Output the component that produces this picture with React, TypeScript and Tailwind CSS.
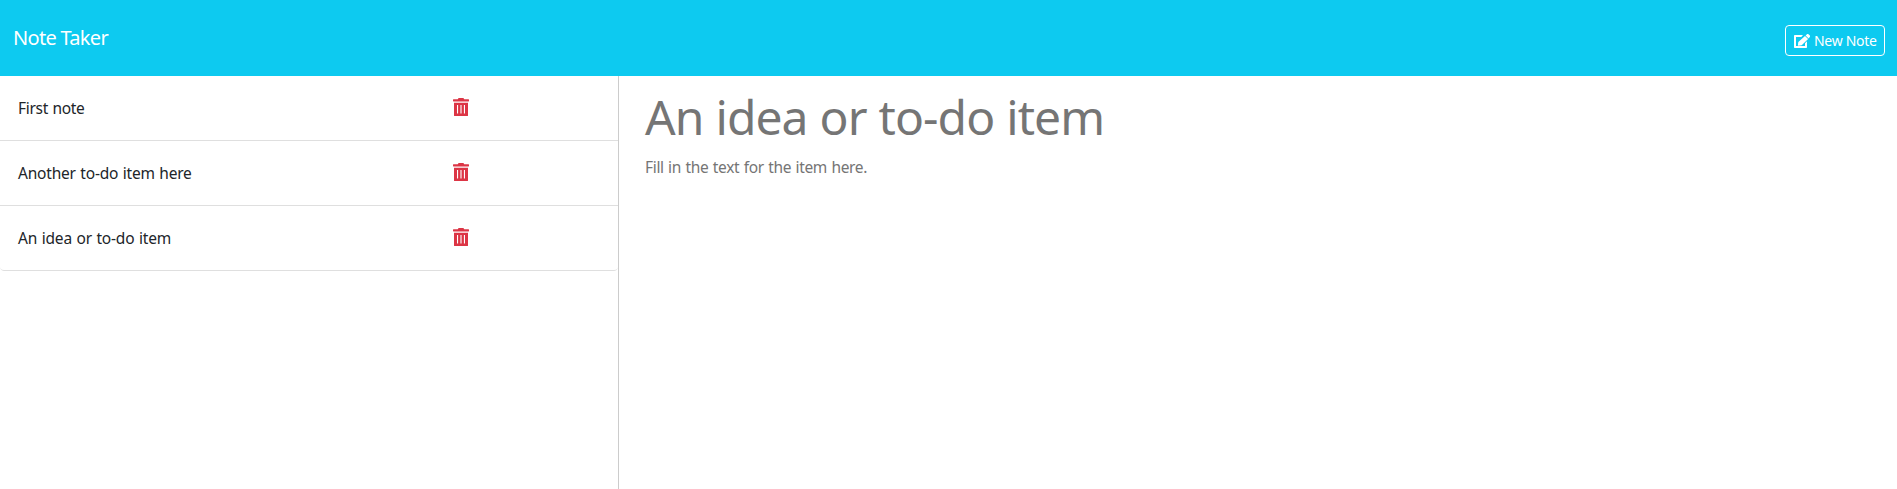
const notes = [
  { title: "First note", spacing: "tracking-[-0.3px]" },
  { title: "Another to-do item here", spacing: "tracking-[-0.2px]" },
  { title: "An idea or to-do item", spacing: "tracking-[-0.18px]" },
];

function EditIcon() {
  return (
    <svg viewBox="0 0 16 14" className="h-[14px] w-4 shrink-0" fill="currentColor">
      <path d="M.8 1H9L7.3 3H2v9h9V9.3l2-2V13.2a.8.8 0 0 1-.8.8H.8a.8.8 0 0 1-.8-.8V1.8A.8.8 0 0 1 .8 1Z" />
      <path d="M11 1.900 14.100 5 7.700 11.300l-3.100.4a.6.6 0 0 1-.7-.7l.4-2.900ZM11.600 1.400 12.700.4a1.400 1.400 0 0 1 2 0l.9.9a1.400 1.400 0 0 1 0 2l-1 1.100Z" />
    </svg>
  );
}

function TrashIcon() {
  return (
    <svg viewBox="0 0 16 18" className="mt-[22px] h-[18px] w-4 shrink-0 text-[#dc3545]" fill="currentColor">
      <path d="M5 .8Q5.2 0 6 0h4q.8 0 1 .8l.2.4H15.5q.5 0 .5.5V3q0 .4-.5.4H.5Q0 3.400 0 3V1.700q0-.5.5-.5H4.800Z" />
      <path
        fillRule="evenodd"
        d="M1 4.700H15V17.400q0 .6-.7.6H1.700Q1 18 1 17.400ZM4 7v8.500h1.100V7ZM7.450 7v8.500h1.100V7ZM10.900 7v8.500H12V7Z"
      />
    </svg>
  );
}

export default function App() {
  return (
    <div className="flex h-[489px] w-full flex-col overflow-hidden bg-white font-['Noto_Sans','Open_Sans',sans-serif] text-[#212529]">
      <header className="flex h-[76px] shrink-0 items-start justify-between bg-[#0dcaf0] pr-3 pl-[13px] text-white">
        <a className="pt-[23px] text-xl leading-[30px] tracking-[-0.7px]">Note Taker</a>
        <button className="mt-[25px] flex h-[31px] w-[100px] items-center gap-1 rounded border border-white pl-2 text-sm leading-[21px] whitespace-nowrap">
          <EditIcon />
          <span className="tracking-[-0.3px]">New Note</span>
        </button>
      </header>
      <main className="flex min-h-0 flex-1">
        <aside className="w-[619px] shrink-0 border-r border-[#ccc]">
          <ul className="overflow-hidden rounded-b">
            {notes.map((note) => (
              <li
                key={note.title}
                className="flex h-[65px] border-b border-[#dfdfdf] pl-[18px] last:rounded-b"
              >
                <span className={`w-[435px] pt-5 text-[15.5px] leading-6 [word-spacing:0.7px] ${note.spacing}`}>
                  {note.title}
                </span>
                <TrashIcon />
              </li>
            ))}
          </ul>
        </aside>
        <section className="pl-[26px] text-[#757575]">
          <h1 className="pt-3 text-[48px] leading-[58px] tracking-[-0.95px] whitespace-nowrap [word-spacing:0.5px]">
            An idea or to-do item
          </h1>
          <p className="pt-[9px] text-[15.5px] leading-6 tracking-[-0.33px] whitespace-nowrap [word-spacing:0.7px]">
            Fill in the text for the item here.
          </p>
        </section>
      </main>
    </div>
  );
}
